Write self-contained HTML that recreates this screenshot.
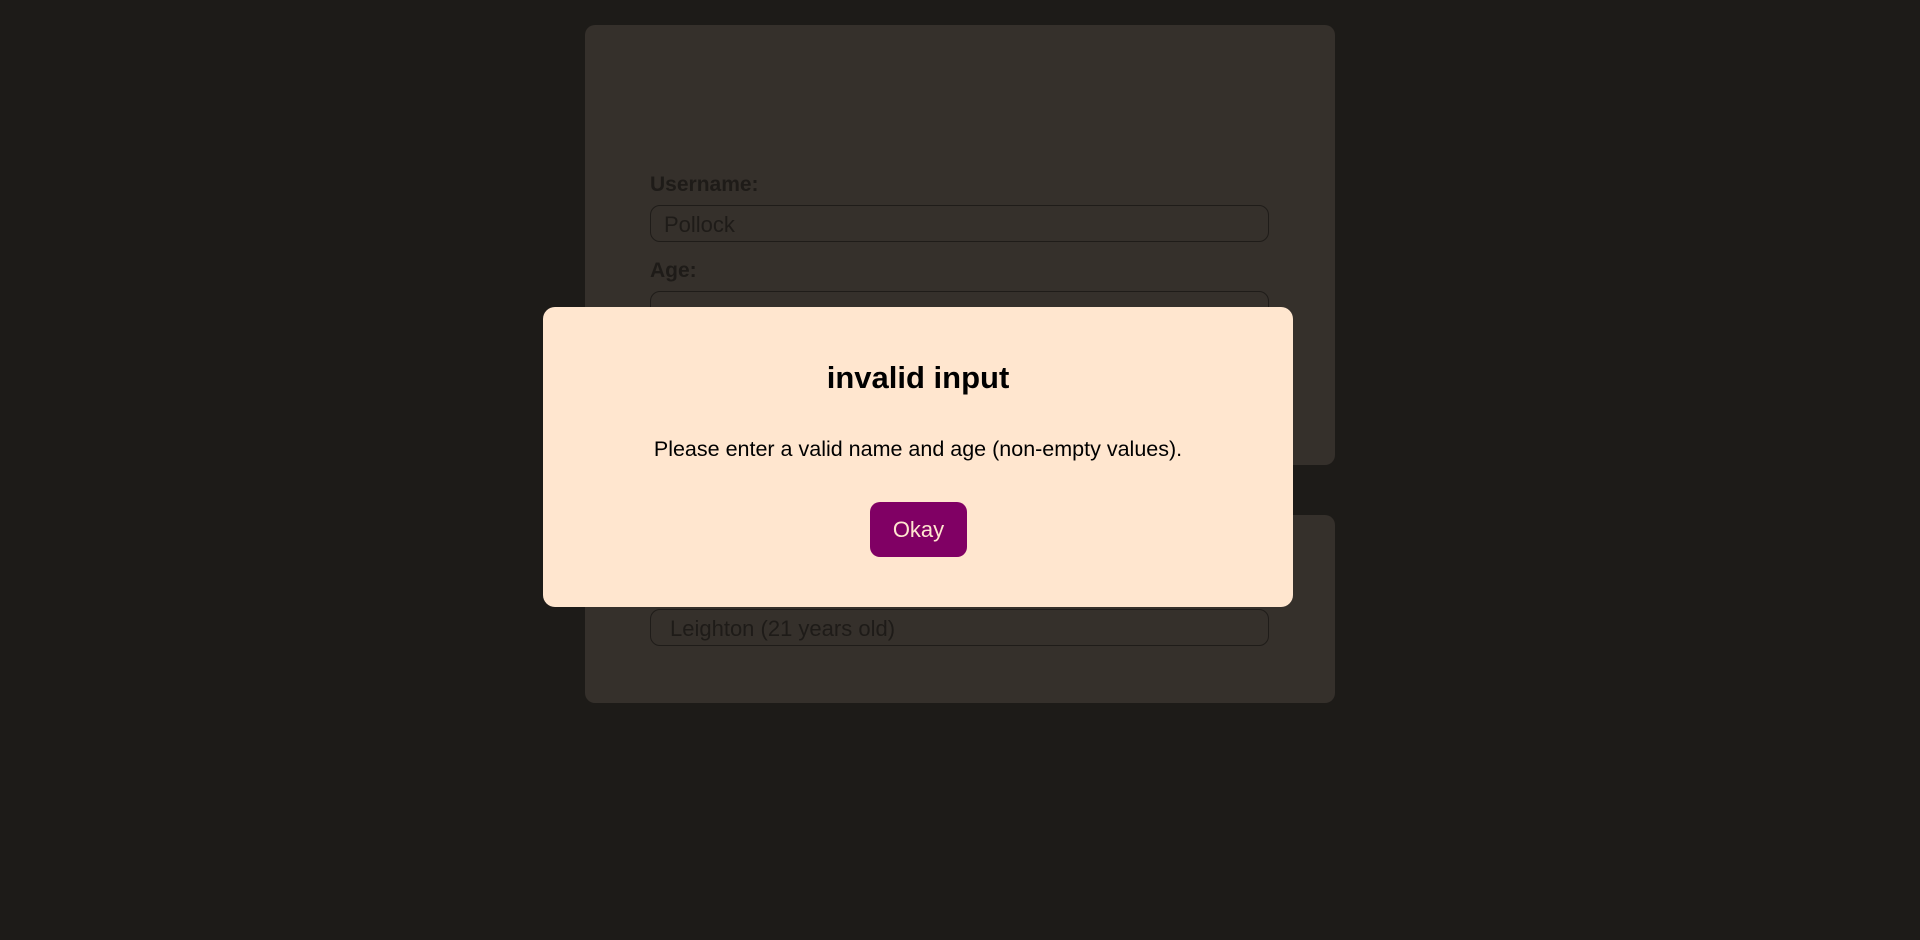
<!DOCTYPE html>
<html><head><meta charset="utf-8"><style>
html,body{margin:0;padding:0;width:1920px;height:940px;background:#1d1b18;overflow:hidden;font-family:"Liberation Sans",sans-serif;}
.card{position:absolute;left:585px;width:750px;background:#35302b;border-radius:10px;}
.lbl{position:absolute;left:65px;font-weight:bold;font-size:21px;color:#1e1b18;}
.inp{position:absolute;left:65px;width:619px;height:37px;border:1px solid #1f1c19;border-radius:10px;box-sizing:border-box;}
.inp span{position:absolute;left:13px;top:6px;font-size:22px;color:#1e1b18;}
.modal{position:absolute;left:543px;top:307px;width:750px;height:300px;background:#ffe6cf;border-radius:12px;}
</style></head><body>
<div class="card" style="top:25px;height:440px;">
  <div class="lbl" style="top:148px;">Username:</div>
  <div class="inp" style="top:180px;"><span>Pollock</span></div>
  <div class="lbl" style="top:234px;">Age:</div>
  <div class="inp" style="top:266px;"></div>
</div>
<div class="card" style="top:515px;height:188px;">
  <div class="inp" style="top:94px;"><span style="left:19px;">Leighton (21 years old)</span></div>
</div>
<div class="modal">
  <div style="position:absolute;left:0;right:0;top:53px;text-align:center;font-size:31px;font-weight:bold;color:#000;">invalid input</div>
  <div style="position:absolute;left:0;right:0;top:130px;text-align:center;font-size:21.5px;color:#000;">Please enter a valid name and age (non-empty values).</div>
  <div style="position:absolute;left:327px;top:195px;width:97px;height:55px;background:#800064;border-radius:10px;color:#ffe6cf;font-size:22px;text-align:center;line-height:56px;">Okay</div>
</div>
</body></html>
